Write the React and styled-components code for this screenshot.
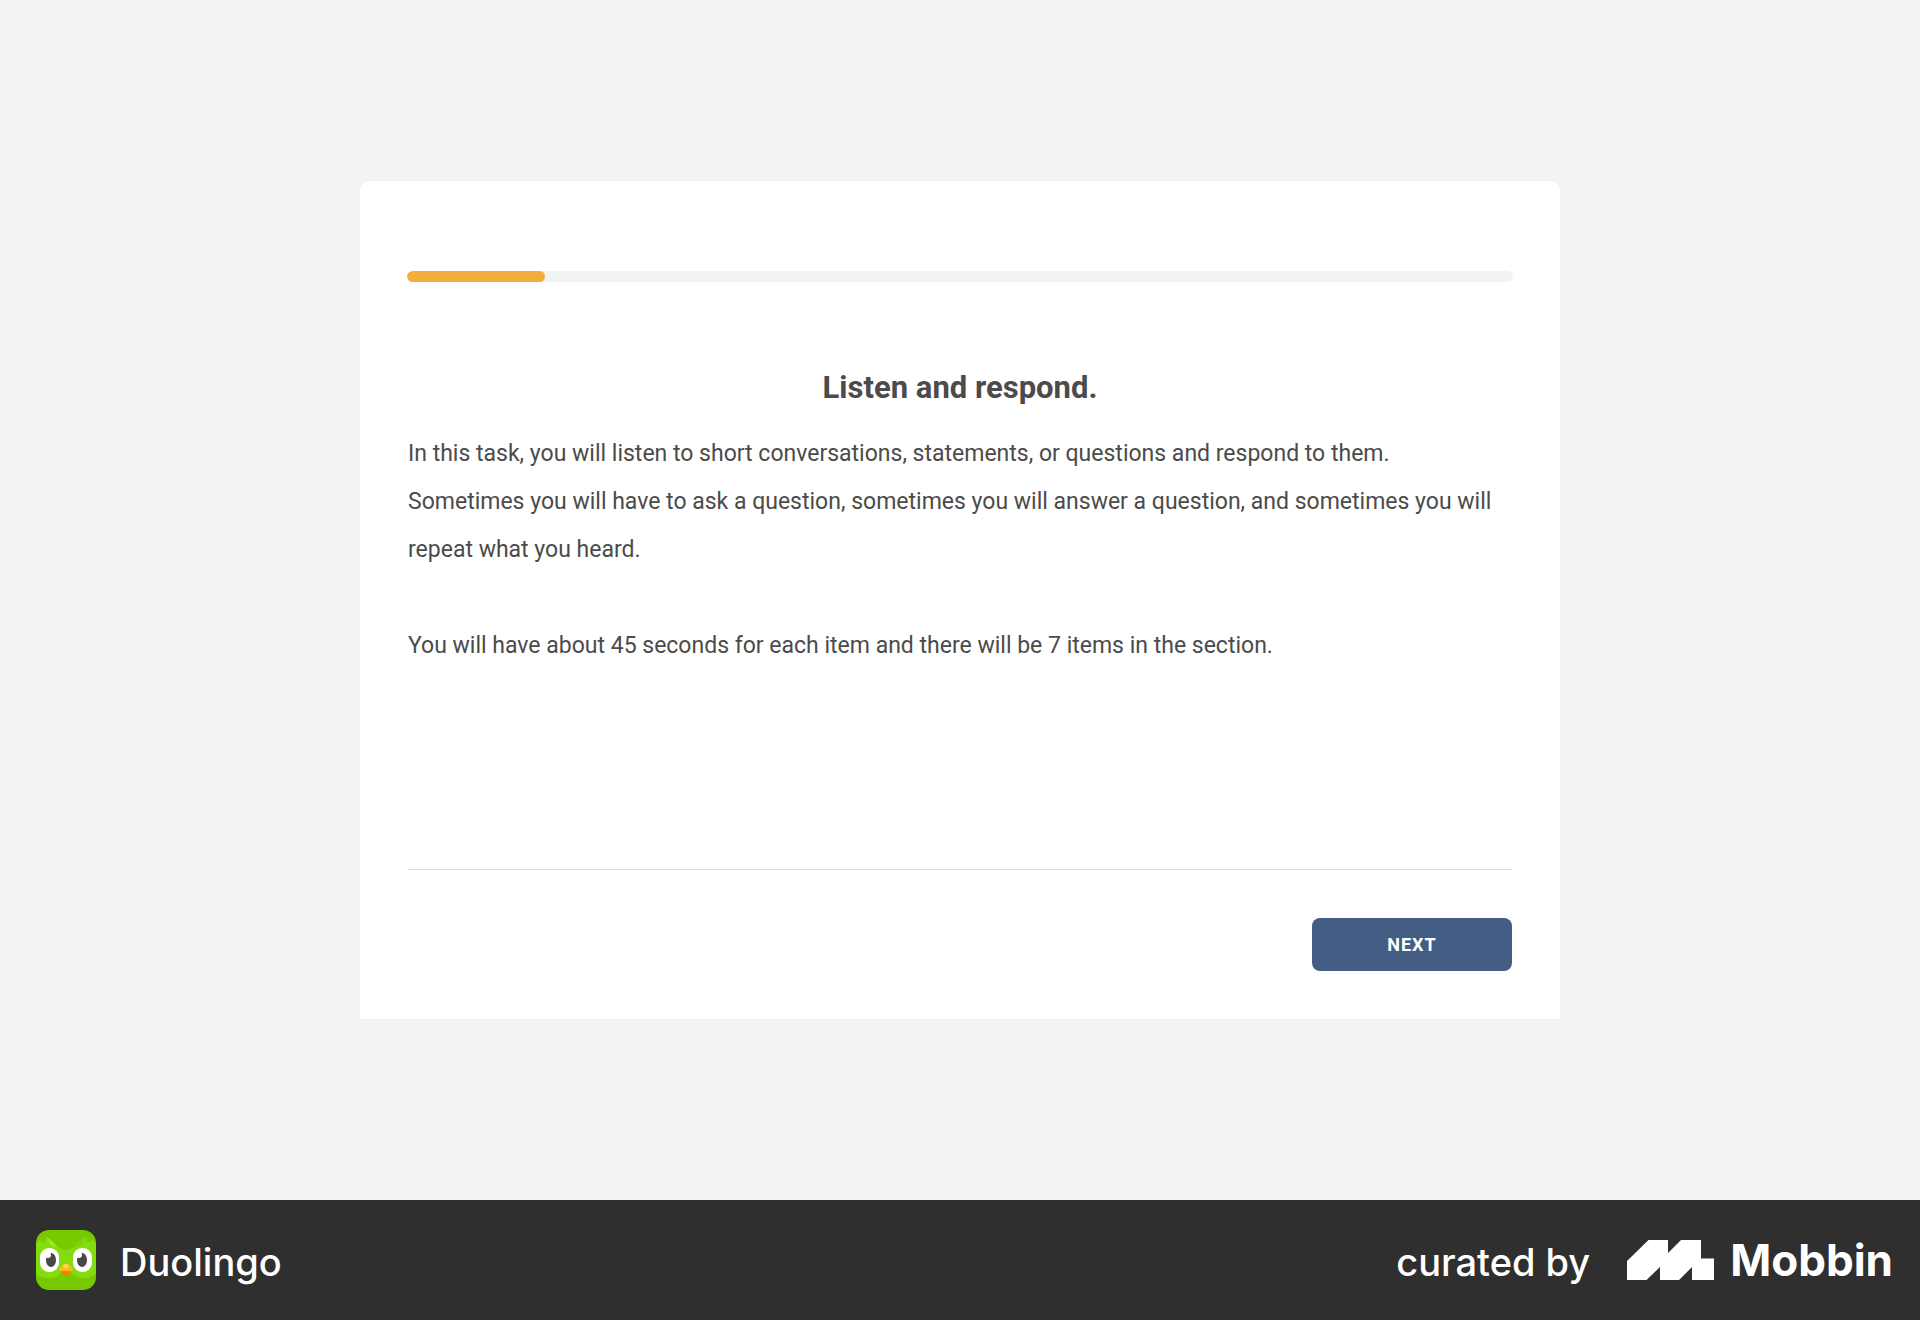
import React from "react";
import styled, { createGlobalStyle } from "styled-components";

const GlobalStyle = createGlobalStyle`
  *, *::before, *::after { box-sizing: border-box; }
  body {
    margin: 0;
    background: #f1f3f5;
    color: #4b4b4b;
    font-family: Roboto, "Noto Sans", sans-serif;
  }
`;

const Page = styled.div`
  display: flex;
  flex-direction: column;
  min-height: 100vh;
`;

const Stage = styled.main`
  flex: 1;
  display: flex;
  align-items: center;
  justify-content: center;
  padding: 48px 24px;
`;

const Card = styled.section`
  width: 100%;
  max-width: 1200px;
  padding: 90px 48px 48px;
  background: #ffffff;
  border-radius: 10px 10px 0 0;
`;

const Track = styled.div`
  height: 11px;
  margin: 0 -1px;
  border-radius: 6px;
  background: #f2f3f4;
  overflow: hidden;
`;

const Fill = styled.div`
  height: 100%;
  border-radius: 6px;
  background: #f3ad3d;
`;

const Title = styled.h1`
  margin: 86px 0 22px;
  font-size: 31px;
  line-height: 40px;
  font-weight: 700;
  text-align: center;
`;

const Copy = styled.div`
  display: flex;
  flex-direction: column;
  gap: 48px;
  padding-bottom: 199px;
`;

const Paragraph = styled.p`
  margin: 0;
  font-size: 23px;
  line-height: 48px;
`;

const Actions = styled.div`
  display: flex;
  justify-content: flex-end;
  padding-top: 48px;
  border-top: 1px solid #dedede;
`;

const NextButton = styled.button`
  width: 200px;
  height: 53px;
  padding: 0;
  border: 0;
  border-radius: 8px;
  background: #445d84;
  color: #ffffff;
  font: 700 18px/24px Roboto, "Noto Sans", sans-serif;
  letter-spacing: 1px;
  cursor: pointer;
`;

const Footer = styled.footer`
  display: flex;
  align-items: center;
  justify-content: space-between;
  min-height: 120px;
  padding: 0 27px 0 36px;
  background: #2f2f2f;
  color: #ffffff;
  font-family: Inter, "Liberation Sans", sans-serif;
`;

const AppBrand = styled.div`
  display: flex;
  align-items: center;
  gap: 24px;
`;

const Credit = styled.div`
  display: flex;
  align-items: center;
  gap: 37px;
`;

const MobbinBrand = styled.div`
  display: flex;
  align-items: center;
  gap: 16px;
`;

const Label = styled.span`
  padding-top: 4px;
  font-size: 38px;
  line-height: 56px;
  font-weight: 500;
`;

const Wordmark = styled.span`
  font-size: 44px;
  line-height: 56px;
  font-weight: 700;
`;

function OwlIcon() {
  return (
    <svg width="60" height="60" viewBox="0 0 60 60" aria-hidden="true">
      <defs>
        <clipPath id="tile">
          <rect width="60" height="60" rx="13" />
        </clipPath>
      </defs>
      <g clipPath="url(#tile)">
        <rect width="60" height="60" fill="#78c900" />
        <path d="M0 14L3 10L9 13L10 7Q16 10 22 17Q26 20 30 20Q34 20 38 17Q44 10 50 7L51 13L57 10L60 14V43Q56 48 47 48Q38 48 35 42H25Q22 48 13 48Q4 48 0 43Z" fill="#85dc0c" />
        <path d="M11 7Q18 12 22 18L14 15Z" fill="#96ea25" />
        <path d="M49 7Q42 12 38 18L46 15Z" fill="#80d20a" />
        <rect x="4" y="18" width="19" height="24" rx="9" fill="#fff" />
        <rect x="37" y="18" width="19" height="24" rx="9" fill="#fff" />
        <ellipse cx="15" cy="30" rx="5" ry="7" fill="#484848" />
        <ellipse cx="46" cy="30" rx="5" ry="7" fill="#484848" />
        <circle cx="12" cy="25" r="3" fill="#fff" />
        <circle cx="43" cy="25" r="3" fill="#fff" />
        <path d="M25 39H35L34 44Q33 46 30 46Q27 46 26 44Z" fill="#f57f00" />
        <path d="M23 39Q27 34 30 34Q33 34 37 39Q37 41 34 41H26Q23 41 23 39Z" fill="#ffb91c" />
        <ellipse cx="30" cy="36" rx="3" ry="2" fill="#ffd84a" />
      </g>
    </svg>
  );
}

function MobbinMark() {
  return (
    <svg width="87" height="40" viewBox="0 0 87 40" aria-hidden="true">
      <path d="M0 21L21.5 0H41V13L54 0H74V18.5H87V40H65V27L52 40H33V27L19.5 40H0Z" fill="#fff" />
    </svg>
  );
}

const PROGRESS = 12.5;

export default function App() {
  return (
    <Page>
      <GlobalStyle />
      <Stage>
        <Card>
          <Track role="progressbar" aria-label="Progress" aria-valuenow={PROGRESS} aria-valuemin={0} aria-valuemax={100}>
            <Fill style={{ width: `${PROGRESS}%` }} />
          </Track>
          <Title>Listen and respond.</Title>
          <Copy>
            <Paragraph>
              In this task, you will listen to short conversations, statements, or questions and respond to them.
              <br />
              Sometimes you will have to ask a question, sometimes you will answer a question, and sometimes you will
              repeat what you heard.
            </Paragraph>
            <Paragraph>You will have about 45 seconds for each item and there will be 7 items in the section.</Paragraph>
          </Copy>
          <Actions>
            <NextButton type="button">NEXT</NextButton>
          </Actions>
        </Card>
      </Stage>
      <Footer>
        <AppBrand>
          <OwlIcon />
          <Label>Duolingo</Label>
        </AppBrand>
        <Credit>
          <Label>curated by</Label>
          <MobbinBrand>
            <MobbinMark />
            <Wordmark>Mobbin</Wordmark>
          </MobbinBrand>
        </Credit>
      </Footer>
    </Page>
  );
}
